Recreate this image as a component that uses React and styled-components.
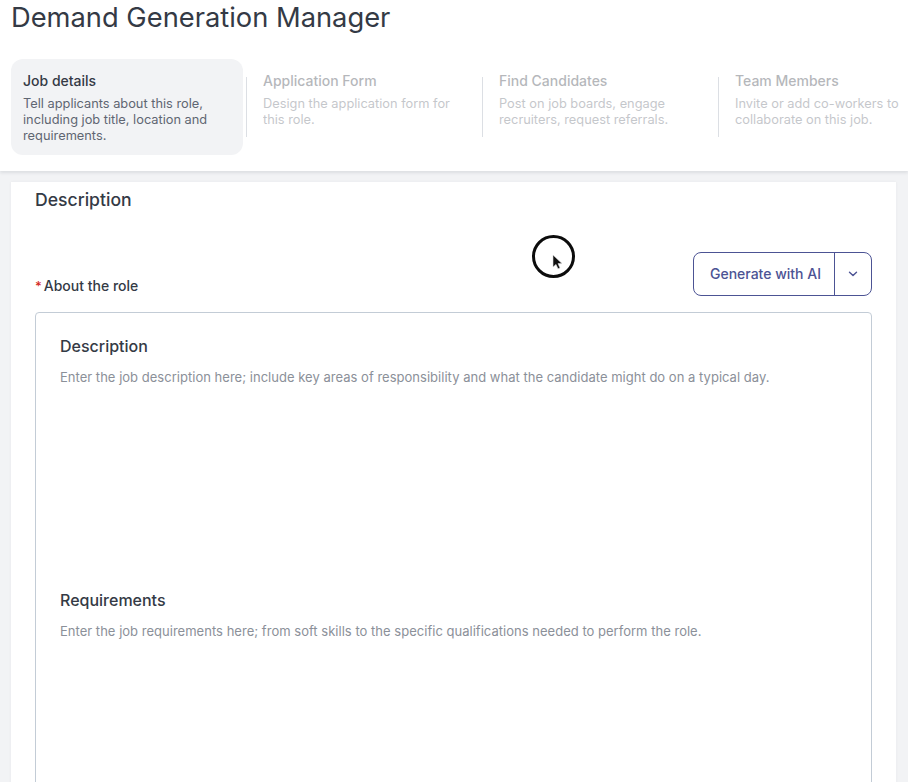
import React from "react";
import styled, { createGlobalStyle } from "styled-components";

const Global = createGlobalStyle`
  html, body { margin: 0; padding: 0; height: 100%; overflow: hidden; background: #f1f2f5; }
  body { font-family: Inter, "Noto Sans", sans-serif; color: #343a45; }
`;

const Page = styled.div`
  position: relative;
  width: 908px;
  height: 782px;
  overflow: hidden;
  background: #f2f3f5;
`;

const Header = styled.header`
  height: 171px;
  box-sizing: border-box;
  padding: 0 0 0 11px;
  background: #fff;
  box-shadow: 0 2px 3px rgba(30, 40, 60, 0.1);
  position: relative;
  z-index: 1;
`;

const Title = styled.h1`
  margin: 0;
  height: 59px;
  box-sizing: border-box;
  font-size: 27.3px;
  line-height: 36px;
  font-weight: 400;
  color: #343a45;
  white-space: nowrap;
`;

const Steps = styled.div`
  display: flex;
  align-items: flex-start;
`;

const Step = styled.div`
  box-sizing: border-box;
  width: ${(p) => (p.$active ? "232px" : "219px")};
  height: 96px;
  padding: 12px 8px 0 ${(p) => (p.$active ? "12px" : "0")};
  border-radius: 12px;
  background: ${(p) => (p.$active ? "#f2f3f5" : "transparent")};
  opacity: ${(p) => (p.$active ? 1 : 0.36)};
  flex: none;
`;

const Divider = styled.span`
  flex: none;
  width: 1px;
  height: 60px;
  margin: 18px 16px 0 ${(p) => p.$left}px;
  background: #dcdfe4;
`;

const StepTitle = styled.div`
  font-size: 14px;
  line-height: 20px;
  font-weight: 500;
  color: #343a45;
  white-space: nowrap;
`;

const StepText = styled.div`
  margin-top: 5px;
  font-size: 12.8px;
  line-height: 16px;
  color: #5f6672;
  white-space: pre-line;
`;

const Card = styled.section`
  margin: 11px 12px 0 11px;
  height: 640px;
  box-sizing: border-box;
  padding: 7px 24px 0;
  background: #fff;
  box-shadow: 0 0 3px rgba(30, 40, 60, 0.05);
`;

const CardTitle = styled.h2`
  margin: 0;
  font-size: 17.6px;
  line-height: 22px;
  font-weight: 500;
  color: #343a45;
`;

const LabelRow = styled.div`
  display: flex;
  justify-content: space-between;
  align-items: flex-end;
  margin-top: 41px;
  height: 44px;
`;

const Label = styled.label`
  font-size: 14px;
  line-height: 20px;
  font-weight: 500;
  color: #343a45;
`;

const Star = styled.span`
  color: #d4291f;
  margin-right: 2px;
  font-size: 13px;
`;

const SplitButton = styled.div`
  display: flex;
  width: 179px;
  height: 44px;
  box-sizing: border-box;
  border: 1px solid #4c5394;
  border-radius: 8px;
  color: #4c5394;
`;

const ButtonMain = styled.button`
  flex: 1;
  border: 0;
  border-right: 1px solid #4c5394;
  background: transparent;
  color: inherit;
  font: 500 14px Inter, sans-serif;
  padding: 0 0 2px 3px;
`;

const ButtonCaret = styled.button`
  width: 36px;
  flex: none;
  border: 0;
  background: transparent;
  color: inherit;
  padding: 0;
  display: flex;
  align-items: center;
  justify-content: center;
`;

const Editor = styled.div`
  margin-top: 16px;
  height: 600px;
  box-sizing: border-box;
  border: 1px solid #c3ccd6;
  border-radius: 4px;
  padding: 22px 24px 0;
`;

const Section = styled.div`
  height: 254px;
`;

const SectionTitle = styled.h3`
  margin: 0;
  font-size: 16px;
  line-height: 22px;
  font-weight: 500;
  color: #343a45;
`;

const Hint = styled.p`
  margin: 11px 0 0;
  font-size: 13px;
  line-height: 18px;
  letter-spacing: 0.02px;
  color: #8b9099;
  white-space: nowrap;
`;

const CursorRing = styled.div`
  position: absolute;
  left: 532px;
  top: 235px;
  width: 43px;
  height: 43px;
  box-sizing: border-box;
  border: 3px solid #0c0c0c;
  border-radius: 50%;
  z-index: 2;
`;

const CursorIcon = styled.svg`
  position: absolute;
  left: 17px;
  top: 16px;
`;

const steps = [
  ["Application Form", "Design the application form for\nthis role.", 3],
  ["Find Candidates", "Post on job boards, engage\nrecruiters, request referrals.", 0],
  ["Team Members", "Invite or add co-workers to\ncollaborate on this job.", 0],
];

export default function App() {
  return (
    <Page>
      <Global />
      <Header>
        <Title>Demand Generation Manager</Title>
        <Steps>
          <Step $active>
            <StepTitle>Job details</StepTitle>
            <StepText>{"Tell applicants about this role,\nincluding job title, location and\nrequirements."}</StepText>
          </Step>
          {steps.map(([t, d, left]) => (
            <React.Fragment key={t}>
              <Divider $left={left} />
              <Step>
                <StepTitle>{t}</StepTitle>
                <StepText>{d}</StepText>
              </Step>
            </React.Fragment>
          ))}
        </Steps>
      </Header>
      <Card>
        <CardTitle>Description</CardTitle>
        <LabelRow>
          <Label><Star>*</Star>About the role</Label>
          <SplitButton>
            <ButtonMain>Generate with AI</ButtonMain>
            <ButtonCaret aria-label="More options">
              <svg width="10" height="6" viewBox="0 0 10 6" fill="none">
                <path d="M1.5 1.2 5 4.6l3.5-3.4" stroke="currentColor" strokeWidth="1.4" strokeLinecap="round" strokeLinejoin="round" />
              </svg>
            </ButtonCaret>
          </SplitButton>
        </LabelRow>
        <Editor>
          <Section>
            <SectionTitle>Description</SectionTitle>
            <Hint>Enter the job description here; include key areas of responsibility and what the candidate might do on a typical day.</Hint>
          </Section>
          <Section>
            <SectionTitle>Requirements</SectionTitle>
            <Hint>Enter the job requirements here; from soft skills to the specific qualifications needed to perform the role.</Hint>
          </Section>
        </Editor>
      </Card>
      <CursorRing>
        <CursorIcon width="11" height="16" viewBox="0 0 11 16">
          <path d="M1 1v12l3-2.6 2 4.4 2-.9-2-4.3h4z" fill="#111" stroke="#ddd" strokeWidth="0.6" />
        </CursorIcon>
      </CursorRing>
    </Page>
  );
}
